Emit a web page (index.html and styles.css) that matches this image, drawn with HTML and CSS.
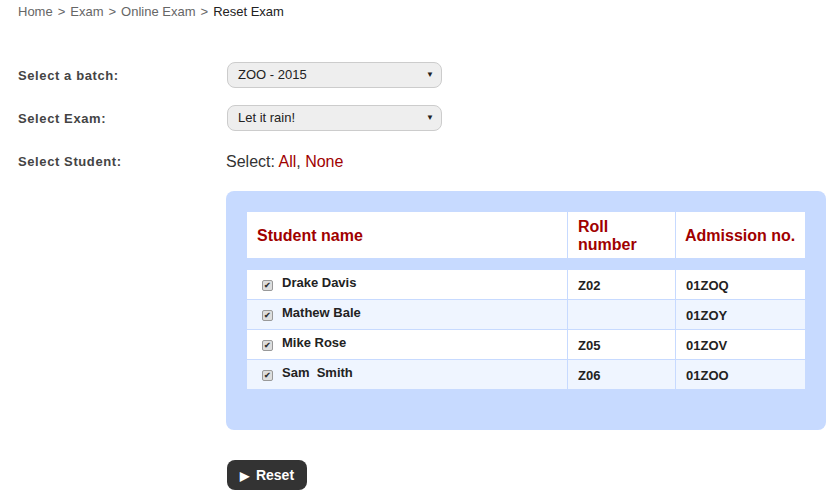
FILE: index.html
```html
<!DOCTYPE html>
<html lang="en">
<head>
    <meta charset="UTF-8">
    <title>Reset Exam</title>
    <link rel="stylesheet" href="styles.css">
</head>
<body>

    <div class="breadcrumb">
        <a href="#">Home</a><span class="sep">&gt;</span><a href="#">Exam</a><span class="sep">&gt;</span><a href="#">Online Exam</a><span class="sep">&gt;</span><span class="current">Reset Exam</span>
    </div>

    <div class="form">
        <div class="row">
            <label class="label">Select a batch:</label>
            <div class="select">ZOO - 2015<span class="arrow">&#9660;</span></div>
        </div>
        <div class="row">
            <label class="label">Select Exam:</label>
            <div class="select">Let it rain!<span class="arrow">&#9660;</span></div>
        </div>
        <div class="row student-row">
            <label class="label">Select Student:</label>
            <div class="picker">Select: <a href="#">All</a>, <a href="#">None</a></div>
        </div>

        <div class="row">
            <span></span>
            <div class="box">
                <table>
                    <thead>
                        <tr>
                            <th class="c-name">Student name</th>
                            <th class="c-roll">Roll<br>number</th>
                            <th class="c-adm">Admission no.</th>
                        </tr>
                    </thead>
                    <tbody>
                        <tr>
                            <td class="name"><span class="check">&#10004;</span>Drake Davis</td>
                            <td>Z02</td>
                            <td>01ZOQ</td>
                        </tr>
                        <tr class="alt">
                            <td class="name"><span class="check">&#10004;</span>Mathew Bale</td>
                            <td></td>
                            <td>01ZOY</td>
                        </tr>
                        <tr>
                            <td class="name"><span class="check">&#10004;</span>Mike Rose</td>
                            <td>Z05</td>
                            <td>01ZOV</td>
                        </tr>
                        <tr class="alt last">
                            <td class="name"><span class="check">&#10004;</span>Sam&nbsp; Smith</td>
                            <td>Z06</td>
                            <td>01ZOO</td>
                        </tr>
                    </tbody>
                </table>
            </div>
        </div>

        <div class="row">
            <span></span>
            <div><button class="reset"><span class="play">&#9654;</span>Reset</button></div>
        </div>
    </div>

</body>
</html>
```

FILE: styles.css
```css
* {
    margin: 0;
    padding: 0;
    box-sizing: border-box;
}
body {
    font-family: "Liberation Sans", Arial, sans-serif;
    background-color: white;
    color: #333;
    width: 838px;
    height: 498px;
    overflow: hidden;
}
a {
    text-decoration: none;
}
.breadcrumb {
    padding: 4px 18px 0;
    font-size: 13px;
    line-height: 16px;
    color: #666;
}
.breadcrumb a {
    color: #666;
}
.breadcrumb .sep {
    padding: 0 5px;
}
.breadcrumb .current {
    color: #222;
}
.form {
    padding: 42px 0 0 18px;
}
.row {
    display: grid;
    grid-template-columns: 208px 600px;
    align-items: center;
    margin-bottom: 17px;
}
.label {
    font-size: 13px;
    letter-spacing: 0.6px;
    font-weight: bold;
    color: #444;
}
.select {
    position: relative;
    width: 215px;
    height: 26px;
    margin-left: 1px;
    padding: 0 10px;
    line-height: 24px;
    font-size: 13px;
    color: #222;
    background-color: #eee;
    border: 1px solid #ccc;
    border-radius: 8px;
}
.arrow {
    position: absolute;
    right: 7px;
    top: 0;
    font-size: 8px;
    color: #222;
}
.student-row {
    align-items: start;
    padding-top: 5px;
    margin-bottom: 20px;
}
.student-row .label {
    padding-top: 1px;
}
.picker {
    font-size: 16px;
    color: #333;
}
.picker a {
    color: #a00000;
}
.box {
    width: 600px;
    padding: 21px 21px 41px;
    background-color: #c7daff;
    border-radius: 8px;
}
table {
    width: 558px;
    table-layout: fixed;
    border-collapse: separate;
    border-spacing: 0;
}
th {
    background-color: white;
    color: #a00000;
    font-size: 16px;
    font-weight: bold;
    text-align: left;
    line-height: 18px;
    padding: 1px 10px 0;
    height: 58px;
    white-space: nowrap;
    border-left: 1px solid #c7daff;
    border-bottom: 12px solid #c7daff;
}
th.c-name {
    border-left: none;
    width: 320px;
}
th.c-roll {
    width: 108px;
}
th.c-adm {
    width: 130px;
    padding-left: 9px;
    padding-right: 0;
}
td {
    background-color: white;
    font-size: 13px;
    font-weight: bold;
    color: #222;
    height: 30px;
    padding: 2px 10px 0;
    border-left: 1px solid #c7daff;
    border-bottom: 1px solid #c7daff;
}
tr.last td {
    height: 29px;
    border-bottom: none;
}
td.name {
    border-left: none;
    padding: 0 10px 4px 15px;
}
tr.alt td {
    background-color: #eff5ff;
}
.check {
    display: inline-block;
    width: 11px;
    height: 11px;
    margin-right: 9px;
    border: 1px solid #999;
    border-radius: 2px;
    background-color: #ddd;
    font-size: 8px;
    line-height: 9px;
    text-align: center;
    color: #333;
    vertical-align: -1px;
}
.reset {
    margin-left: 1px;
    margin-top: 13px;
    width: 80px;
    height: 30px;
    background-color: #333;
    color: white;
    border: none;
    border-radius: 8px;
    font-family: "Liberation Sans", Arial, sans-serif;
    font-size: 14px;
    font-weight: bold;
}
.play {
    font-size: 12px;
    margin-right: 7px;
}
```
